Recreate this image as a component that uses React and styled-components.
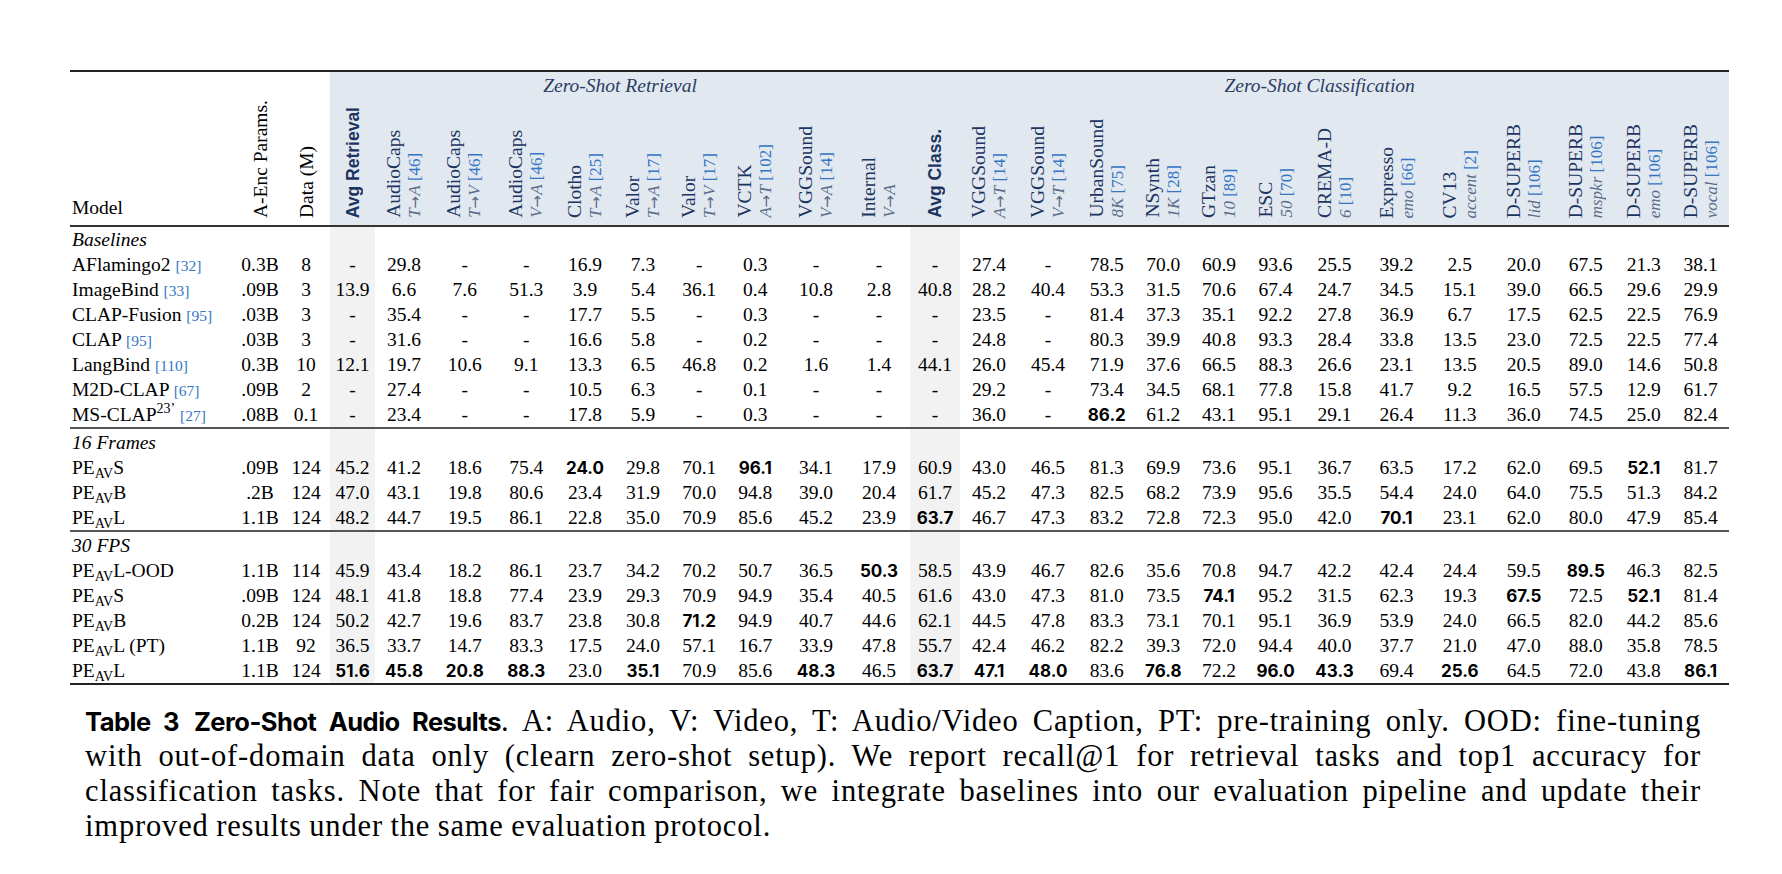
import React from "react";
import styled, { createGlobalStyle } from "styled-components";

const GlobalStyle = createGlobalStyle`
  html, body { margin: 0; padding: 0; background: #fff; }
  body { font-family: "Liberation Serif", "Times New Roman", serif; color: #000; }
`;

const Page = styled.div`
  box-sizing: border-box;
  width: 1782px;
  height: 874px;
  overflow: hidden;
  padding: 70px 0 0 70px;
`;

const Table = styled.table`
  border-collapse: collapse;
  table-layout: fixed;
  width: 1659px;
  font-size: 19.5px;
  border-top: 2px solid #222;
  border-bottom: 2px solid #222;
`;

const GroupRow = styled.tr`
  height: 26px;
`;

const LabelRow = styled.tr`
  height: 129px;
  border-bottom: 2px solid #333;
`;

const ModelHead = styled.th`
  font-weight: 400;
  text-align: left;
  vertical-align: bottom;
  padding: 0 0 5px 2px;
  line-height: 25px;
`;

const PlainHead = styled.th`
  font-weight: 400;
  vertical-align: bottom;
  text-align: center;
  padding: 0 0 2px 0;
`;

const GroupHead = styled.th`
  font-weight: 400;
  font-style: italic;
  color: #2a3d63;
  background: #e2e8f0;
  text-align: center;
  vertical-align: middle;
  padding: 2px 0 0 0;
`;

const LabelHead = styled.th`
  font-weight: 400;
  background: #e2e8f0;
  vertical-align: bottom;
  text-align: center;
  padding: 0 0 2px 0;
`;

const Vert = styled.span`
  display: inline-block;
  writing-mode: vertical-rl;
  transform: rotate(180deg);
  text-align: start;
  white-space: nowrap;
  line-height: 21px;
  font-size: 19.5px;
  color: ${(p) => (p.$plain ? "#000" : "#1c3461")};
`;

const BoldLabel = styled.span`
  font-family: "Liberation Sans", Arial, sans-serif;
  font-weight: 700;
  font-size: 17.5px;
  color: #1c3461;
`;

const SubLine = styled.span`
  font-size: 17px;
  color: #5a6d8a;
`;

const I = styled.i`
  font-style: italic;
`;

const ArrowGlyph = styled.span`
  font-family: "DejaVu Sans", sans-serif;
  font-size: 15px;
  font-style: normal;
  margin: 0 1px;
`;

const Cite = styled.span`
  font-style: normal;
  font-size: ${(p) => (p.$small ? "15.5px" : "inherit")};
  line-height: 1;
  color: #3576c4;
`;

const Row = styled.tr`
  height: ${(p) => (p.$tall ? "27px" : "25px")};
  border-bottom: ${(p) => (p.$rule ? "2px solid #555" : "none")};
`;

const SectionCell = styled.td`
  font-style: italic;
  padding: 0 0 0 2px;
  line-height: 25px;
  white-space: nowrap;
`;

const ModelCell = styled.td`
  text-align: left;
  padding: 0 0 0 2px;
  height: 25px;
  line-height: 25px;
  white-space: nowrap;
`;

const Cell = styled.td`
  text-align: center;
  padding: 0;
  line-height: 25px;
  white-space: nowrap;
  background: ${(p) => (p.$avg ? "#f2f2f2" : "transparent")};
`;

const Best = styled.span`
  font-family: Inter, "Liberation Sans", sans-serif;
  font-weight: 700;
  font-size: 17px;
  line-height: 1;
`;

const Sub = styled.sub`
  font-size: 14px;
  vertical-align: -4px;
  line-height: 0;
`;

const Sup = styled.sup`
  font-size: 14px;
  vertical-align: 8px;
  line-height: 0;
`;

const Caption = styled.div`
  width: 1616px;
  margin: 19px 0 0 15px;
  font-family: "Liberation Serif", "Times New Roman", serif;
  font-size: 30.5px;
  line-height: 35px;
  letter-spacing: 0.85px;
  word-spacing: -1px;
`;

const CapLine = styled.div`
  white-space: nowrap;
  text-align: ${(p) => (p.$last ? "left" : "justify")};
  text-align-last: ${(p) => (p.$last ? "left" : "justify")};
`;

const CapTitle = styled.span`
  font-family: Inter, "Liberation Sans", sans-serif;
  font-weight: 700;
  font-size: 25.5px;
  letter-spacing: -0.5px;
  word-spacing: 0;
`;

const Gap = styled.span`
  display: inline-block;
  width: 15px;
`;

const widths = [
  168, 44, 48, 45, 58, 63.5, 59.5, 58, 58, 54.5, 57.5, 64, 62, 50, 58, 60,
  57.5, 55.5, 56, 57, 61, 63, 63.5, 64.5, 59.5, 56.5, 57,
];

const Arrow = ({ a, b }) => (
  <>
    <I>{a}</I>
    <ArrowGlyph>→</ArrowGlyph>
    <I>{b}</I>
  </>
);

const columns = [
  { label: <BoldLabel>Avg Retrieval</BoldLabel> },
  { name: "AudioCaps", sub: <><Arrow a="T" b="A" /> <Cite>[46]</Cite></> },
  { name: "AudioCaps", sub: <><Arrow a="T" b="V" /> <Cite>[46]</Cite></> },
  { name: "AudioCaps", sub: <><Arrow a="V" b="A" /> <Cite>[46]</Cite></> },
  { name: "Clotho", sub: <><Arrow a="T" b="A" /> <Cite>[25]</Cite></> },
  { name: "Valor", sub: <><Arrow a="T" b="A" /> <Cite>[17]</Cite></> },
  { name: "Valor", sub: <><Arrow a="T" b="V" /> <Cite>[17]</Cite></> },
  { name: "VCTK", sub: <><Arrow a="A" b="T" /> <Cite>[102]</Cite></> },
  { name: "VGGSound", sub: <><Arrow a="V" b="A" /> <Cite>[14]</Cite></> },
  { name: "Internal", sub: <Arrow a="V" b="A" /> },
  { label: <BoldLabel>Avg Class.</BoldLabel> },
  { name: "VGGSound", sub: <><Arrow a="A" b="T" /> <Cite>[14]</Cite></> },
  { name: "VGGSound", sub: <><Arrow a="V" b="T" /> <Cite>[14]</Cite></> },
  { name: "UrbanSound", sub: <><I>8K</I> <Cite>[75]</Cite></> },
  { name: "NSynth", sub: <><I>1K</I> <Cite>[28]</Cite></> },
  { name: "GTzan", sub: <><I>10</I> <Cite>[89]</Cite></> },
  { name: "ESC", sub: <><I>50</I> <Cite>[70]</Cite></> },
  { name: "CREMA-D", sub: <><I>6</I> <Cite>[10]</Cite></> },
  { name: "Expresso", sub: <><I>emo</I> <Cite>[66]</Cite></> },
  { name: "CV13", sub: <><I>accent</I> <Cite>[2]</Cite></> },
  { name: "D-SUPERB", sub: <><I>lid</I> <Cite>[106]</Cite></> },
  { name: "D-SUPERB", sub: <><I>mspkr</I> <Cite>[106]</Cite></> },
  { name: "D-SUPERB", sub: <><I>emo</I> <Cite>[106]</Cite></> },
  { name: "D-SUPERB", sub: <><I>vocal</I> <Cite>[106]</Cite></> },
];

const avgIndex = new Set([2, 12]);

const PE = ({ v }) => (
  <>
    PE<Sub>AV</Sub>
    {v}
  </>
);

const sections = [
  {
    title: "Baselines",
    rows: [
      { name: <>AFlamingo2 <Cite $small>[32]</Cite></>, v: "0.3B 8 - 29.8 - - 16.9 7.3 - 0.3 - - - 27.4 - 78.5 70.0 60.9 93.6 25.5 39.2 2.5 20.0 67.5 21.3 38.1" },
      { name: <>ImageBind <Cite $small>[33]</Cite></>, v: ".09B 3 13.9 6.6 7.6 51.3 3.9 5.4 36.1 0.4 10.8 2.8 40.8 28.2 40.4 53.3 31.5 70.6 67.4 24.7 34.5 15.1 39.0 66.5 29.6 29.9" },
      { name: <>CLAP-Fusion <Cite $small>[95]</Cite></>, v: ".03B 3 - 35.4 - - 17.7 5.5 - 0.3 - - - 23.5 - 81.4 37.3 35.1 92.2 27.8 36.9 6.7 17.5 62.5 22.5 76.9" },
      { name: <>CLAP <Cite $small>[95]</Cite></>, v: ".03B 3 - 31.6 - - 16.6 5.8 - 0.2 - - - 24.8 - 80.3 39.9 40.8 93.3 28.4 33.8 13.5 23.0 72.5 22.5 77.4" },
      { name: <>LangBind <Cite $small>[110]</Cite></>, v: "0.3B 10 12.1 19.7 10.6 9.1 13.3 6.5 46.8 0.2 1.6 1.4 44.1 26.0 45.4 71.9 37.6 66.5 88.3 26.6 23.1 13.5 20.5 89.0 14.6 50.8" },
      { name: <>M2D-CLAP <Cite $small>[67]</Cite></>, v: ".09B 2 - 27.4 - - 10.5 6.3 - 0.1 - - - 29.2 - 73.4 34.5 68.1 77.8 15.8 41.7 9.2 16.5 57.5 12.9 61.7" },
      { name: <>MS-CLAP<Sup>23’</Sup> <Cite $small>[27]</Cite></>, v: ".08B 0.1 - 23.4 - - 17.8 5.9 - 0.3 - - - 36.0 - *86.2 61.2 43.1 95.1 29.1 26.4 11.3 36.0 74.5 25.0 82.4" },
    ],
  },
  {
    title: "16 Frames",
    rows: [
      { name: <PE v="S" />, v: ".09B 124 45.2 41.2 18.6 75.4 *24.0 29.8 70.1 *96.1 34.1 17.9 60.9 43.0 46.5 81.3 69.9 73.6 95.1 36.7 63.5 17.2 62.0 69.5 *52.1 81.7" },
      { name: <PE v="B" />, v: ".2B 124 47.0 43.1 19.8 80.6 23.4 31.9 70.0 94.8 39.0 20.4 61.7 45.2 47.3 82.5 68.2 73.9 95.6 35.5 54.4 24.0 64.0 75.5 51.3 84.2" },
      { name: <PE v="L" />, v: "1.1B 124 48.2 44.7 19.5 86.1 22.8 35.0 70.9 85.6 45.2 23.9 *63.7 46.7 47.3 83.2 72.8 72.3 95.0 42.0 *70.1 23.1 62.0 80.0 47.9 85.4" },
    ],
  },
  {
    title: "30 FPS",
    rows: [
      { name: <PE v="L-OOD" />, v: "1.1B 114 45.9 43.4 18.2 86.1 23.7 34.2 70.2 50.7 36.5 *50.3 58.5 43.9 46.7 82.6 35.6 70.8 94.7 42.2 42.4 24.4 59.5 *89.5 46.3 82.5" },
      { name: <PE v="S" />, v: ".09B 124 48.1 41.8 18.8 77.4 23.9 29.3 70.9 94.9 35.4 40.5 61.6 43.0 47.3 81.0 73.5 *74.1 95.2 31.5 62.3 19.3 *67.5 72.5 *52.1 81.4" },
      { name: <PE v="B" />, v: "0.2B 124 50.2 42.7 19.6 83.7 23.8 30.8 *71.2 94.9 40.7 44.6 62.1 44.5 47.8 83.3 73.1 70.1 95.1 36.9 53.9 24.0 66.5 82.0 44.2 85.6" },
      { name: <PE v="L (PT)" />, v: "1.1B 92 36.5 33.7 14.7 83.3 17.5 24.0 57.1 16.7 33.9 47.8 55.7 42.4 46.2 82.2 39.3 72.0 94.4 40.0 37.7 21.0 47.0 88.0 35.8 78.5" },
      { name: <PE v="L" />, v: "1.1B 124 *51.6 *45.8 *20.8 *88.3 23.0 *35.1 70.9 85.6 *48.3 46.5 *63.7 *47.1 *48.0 83.6 *76.8 72.2 *96.0 *43.3 69.4 *25.6 64.5 72.0 43.8 *86.1" },
    ],
  },
];

const Value = ({ t }) =>
  t.startsWith("*") ? <Best>{t.slice(1)}</Best> : <>{t}</>;

export default function App() {
  return (
    <>
      <GlobalStyle />
      <Page>
        <Table>
          <colgroup>
            {widths.map((w, i) => (
              <col key={i} style={{ width: `${w}px` }} />
            ))}
          </colgroup>
          <thead>
            <GroupRow>
              <ModelHead rowSpan={2}>Model</ModelHead>
              <PlainHead rowSpan={2}>
                <Vert $plain>A-Enc Params.</Vert>
              </PlainHead>
              <PlainHead rowSpan={2}>
                <Vert $plain>Data (M)</Vert>
              </PlainHead>
              <GroupHead colSpan={10}>Zero-Shot Retrieval</GroupHead>
              <GroupHead colSpan={14}>Zero-Shot Classification</GroupHead>
            </GroupRow>
            <LabelRow>
              {columns.map((c, i) => (
                <LabelHead key={i}>
                  <Vert>
                    {c.label ? (
                      c.label
                    ) : (
                      <>
                        {c.name}
                        <br />
                        <SubLine>{c.sub}</SubLine>
                      </>
                    )}
                  </Vert>
                </LabelHead>
              ))}
            </LabelRow>
          </thead>
          <tbody>
            {sections.map((s, si) => (
              <React.Fragment key={si}>
                <Row $tall={si > 0}>
                  <SectionCell>{s.title}</SectionCell>
                  {Array.from({ length: 26 }).map((_, i) => (
                    <Cell key={i} $avg={avgIndex.has(i)} />
                  ))}
                </Row>
                {s.rows.map((r, ri) => (
                  <Row
                    key={ri}
                    $rule={ri === s.rows.length - 1 && si < sections.length - 1}
                  >
                    <ModelCell>{r.name}</ModelCell>
                    {r.v.split(" ").map((t, i) => (
                      <Cell key={i} $avg={avgIndex.has(i)}>
                        <Value t={t} />
                      </Cell>
                    ))}
                  </Row>
                ))}
              </React.Fragment>
            ))}
          </tbody>
        </Table>
        <Caption>
          <CapLine>
            <CapTitle>
              Table 3<Gap />Zero-Shot Audio Results
            </CapTitle>
            . A: Audio, V: Video, T: Audio/Video Caption, PT: pre-training only. OOD: fine-tuning
          </CapLine>
          <CapLine>
            with out-of-domain data only (clearn zero-shot setup). We report recall@1 for retrieval tasks and top1 accuracy for
          </CapLine>
          <CapLine>
            classification tasks. Note that for fair comparison, we integrate baselines into our evaluation pipeline and update their
          </CapLine>
          <CapLine $last>improved results under the same evaluation protocol.</CapLine>
        </Caption>
      </Page>
    </>
  );
}
